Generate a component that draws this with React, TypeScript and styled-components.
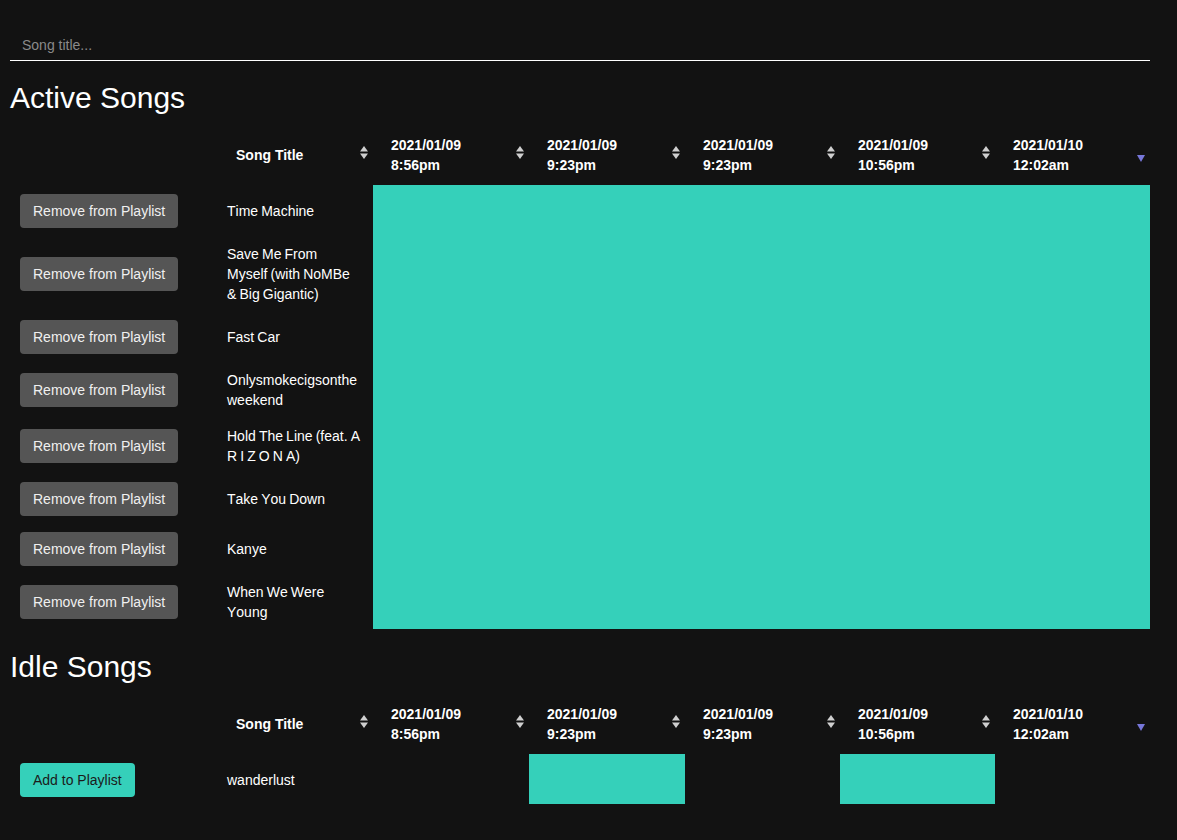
import React from 'react';
import styled, { createGlobalStyle } from 'styled-components';

const GlobalStyle = createGlobalStyle`
  html, body {
    margin: 0;
    background: #121212;
  }
  body {
    font-family: "Liberation Sans", Arial, sans-serif;
    color: #fff;
  }
`;

type Song = { id: number; title: string; plays: boolean[] };

const dates = [
  { day: '2021/01/09', time: '8:56pm', width: 156 },
  { day: '2021/01/09', time: '9:23pm', width: 156 },
  { day: '2021/01/09', time: '9:23pm', width: 155 },
  { day: '2021/01/09', time: '10:56pm', width: 155 },
  { day: '2021/01/10', time: '12:02am' },
];

const all = [true, true, true, true, true];

const activeSongs: Song[] = [
  { id: 1, title: 'Time Machine', plays: all },
  { id: 2, title: 'Save Me From Myself (with NoMBe & Big Gigantic)', plays: all },
  { id: 3, title: 'Fast Car', plays: all },
  { id: 4, title: 'Onlysmokecigsonthe weekend', plays: all },
  { id: 5, title: 'Hold The Line (feat. A R I Z O N A)', plays: all },
  { id: 6, title: 'Take You Down', plays: all },
  { id: 7, title: 'Kanye', plays: all },
  { id: 8, title: 'When We Were Young', plays: all },
];

const idleSongs: Song[] = [
  { id: 9, title: 'wanderlust', plays: [false, true, false, true, false] },
];

const SortIcon = ({ sorted }: { sorted?: boolean }) =>
  sorted ? (
    <SortedSvg width="8" height="7" viewBox="0 0 8 7">
      <polygon points="0,0 8,0 4,7" fill="#7777d9" />
    </SortedSvg>
  ) : (
    <SortSvg width="8" height="13" viewBox="0 0 8 13">
      <polygon points="0,5.5 8,5.5 4,0" fill="#cfcfcf" />
      <polygon points="0,7.5 8,7.5 4,13" fill="#cfcfcf" />
    </SortSvg>
  );

const SongTable = ({ songs, action }: { songs: Song[]; action: 'remove' | 'add' }) => (
  <Table>
    <colgroup>
      <col style={{ width: 207 }} />
      <col style={{ width: 156 }} />
      {dates.map((d, i) => (
        <col key={i} style={d.width ? { width: d.width } : undefined} />
      ))}
    </colgroup>
    <thead>
      <tr>
        <th />
        <HeadCell $first>
          <HeadInner>
            <span>Song Title</span>
            <SortIcon />
          </HeadInner>
        </HeadCell>
        {dates.map((d, i) => (
          <HeadCell key={i}>
            <HeadInner>
              <span>
                <Line>{d.day}</Line>
                <Line>{d.time}</Line>
              </span>
              <SortIcon sorted={i === dates.length - 1} />
            </HeadInner>
          </HeadCell>
        ))}
      </tr>
    </thead>
    <tbody>
      {songs.map((song) => (
        <tr key={song.id}>
          <Cell>
            {action === 'remove' ? (
              <Button $variant="remove">Remove from Playlist</Button>
            ) : (
              <Button $variant="add">Add to Playlist</Button>
            )}
          </Cell>
          <TitleCell>{song.title}</TitleCell>
          {song.plays.map((on, i) => (
            <PlayCell key={i} $on={on} />
          ))}
        </tr>
      ))}
    </tbody>
  </Table>
);

export default function App() {
  return (
    <Page>
      <GlobalStyle />
      <SearchInput placeholder="Song title..." />
      <Heading>Active Songs</Heading>
      <SongTable songs={activeSongs} action="remove" />
      <Heading $gap={20}>Idle Songs</Heading>
      <SongTable songs={idleSongs} action="add" />
    </Page>
  );
}

const Page = styled.div`
  padding: 29px 27px 20px 10px;
`;

const SearchInput = styled.input`
  display: block;
  box-sizing: border-box;
  width: 100%;
  height: 32px;
  padding: 0 12px;
  background: transparent;
  border: none;
  border-bottom: 1px solid #fff;
  color: #fff;
  font-family: "Liberation Sans", Arial, sans-serif;
  font-size: 14px;
  outline: none;

  &::placeholder {
    color: #8a8a8a;
  }
`;

const Heading = styled.h2<{ $gap?: number }>`
  margin: ${(p) => p.$gap ?? 19}px 0 9px;
  font-size: 30px;
  line-height: 36px;
  font-weight: 400;
`;

const Table = styled.table`
  width: 100%;
  table-layout: fixed;
  border-collapse: collapse;
  border-spacing: 0;
`;

const HeadCell = styled.th<{ $first?: boolean }>`
  padding: 10px 5.5px 10px ${(p) => (p.$first ? 19 : 18)}px;
  font-size: 14px;
  line-height: 20px;
  font-weight: 700;
  text-align: left;
`;

const HeadInner = styled.div`
  display: flex;
  align-items: center;
  justify-content: space-between;
`;

const Line = styled.span`
  display: block;
`;

const SortSvg = styled.svg`
  flex: none;
  display: block;
  margin-bottom: 5px;
`;

const SortedSvg = styled.svg`
  flex: none;
  display: block;
  margin-top: 7px;
`;

const Cell = styled.td`
  padding: 9px 10px 7px;
  vertical-align: middle;
`;

const TitleCell = styled.td`
  padding: 9px 13px 7px 10px;
  font-size: 14px;
  line-height: 20px;
  word-spacing: -0.8px;
  font-kerning: none;
  vertical-align: middle;
`;

const PlayCell = styled.td<{ $on: boolean }>`
  padding: 0;
  background: ${(p) => (p.$on ? '#35d0ba' : 'transparent')};
`;

const Button = styled.button<{ $variant: 'remove' | 'add' }>`
  display: block;
  height: 34px;
  padding: 0 13px;
  border: none;
  border-radius: 4px;
  font-family: "Liberation Sans", Arial, sans-serif;
  font-size: 14px;
  white-space: nowrap;
  cursor: pointer;
  background: ${(p) => (p.$variant === 'remove' ? '#555555' : '#35d0ba')};
  color: ${(p) => (p.$variant === 'remove' ? '#f0f0f0' : '#1b1b1b')};
`;
